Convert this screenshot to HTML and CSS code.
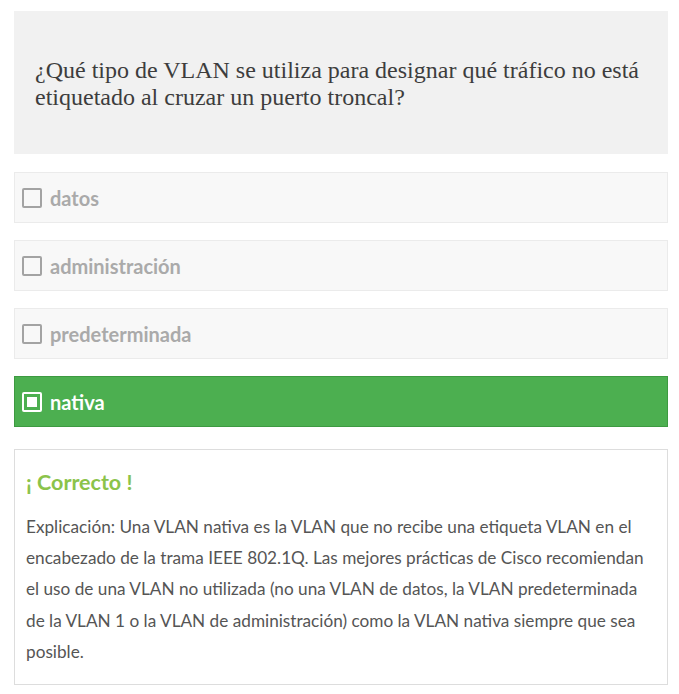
FILE: index.html
```html
<!DOCTYPE html>
<html lang="es">
<head>
<meta charset="utf-8">
<title>Pregunta VLAN</title>
<link rel="stylesheet" href="styles.css">
</head>
<body>
<div class="quiz">
  <div class="question">¿Qué tipo de VLAN se utiliza para designar qué tráfico no está etiquetado al cruzar un puerto troncal?</div>
  <div class="options">
    <div class="option"><span class="box"></span><span class="label">datos</span></div>
    <div class="option"><span class="box"></span><span class="label">administración</span></div>
    <div class="option"><span class="box"></span><span class="label">predeterminada</span></div>
    <div class="option correct"><span class="box"><span class="fill"></span></span><span class="label">nativa</span></div>
  </div>
  <div class="explain">
    <div class="title">¡ Correcto !</div>
    <p class="text">Explicación: Una VLAN nativa es la VLAN que no recibe una etiqueta VLAN en el encabezado de la trama IEEE 802.1Q. Las mejores prácticas de Cisco recomiendan el uso de una VLAN no utilizada (no una VLAN de datos, la VLAN predeterminada de la VLAN 1 o la VLAN de administración) como la VLAN nativa siempre que sea posible.</p>
  </div>
</div>
</body>
</html>
```
FILE: styles.css
```css
html, body { margin: 0; padding: 0; background: #fff; }
.quiz {
  padding: 11px 11px 0 14px;
  font-family: Lato, "Liberation Sans", sans-serif;
}
.question {
  background: #f1f1f1;
  padding: 46px 20px 42px 21px;
  height: 55px;
  font-family: "Liberation Serif", "DejaVu Serif", serif;
  font-size: 24px;
  line-height: 27px;
  color: #3d3d3d;
}
.options {
  display: flex;
  flex-direction: column;
  gap: 17px;
  margin-top: 18px;
}
.option {
  display: flex;
  align-items: center;
  gap: 8px;
  height: 48px;
  padding: 1px 7px 0;
  background: #f8f8f8;
  border: 1px solid #ebebeb;
  font-size: 20px;
  font-weight: bold;
  color: #aaa;
}
.box {
  box-sizing: border-box;
  width: 20px;
  height: 20px;
  border: 2px solid #a3a3a3;
  border-radius: 2px;
  display: flex;
  align-items: center;
  justify-content: center;
  flex: none;
}
.option.correct {
  background: #4caf50;
  border-color: #3d9a41;
  color: #fff;
}
.option.correct .box { border-color: #fff; }
.fill { width: 10px; height: 10px; background: #fff; }
.explain {
  margin-top: 22px;
  border: 1px solid #ddd;
  padding: 17px 11px 17px 11px;
}
.title {
  font-size: 21.5px;
  font-weight: bold;
  color: #8bc34a;
  line-height: 30px;
}
.text {
  margin: 14px 0 0;
  font-size: 17.2px;
  line-height: 31.2px;
  color: #555;
}
```
